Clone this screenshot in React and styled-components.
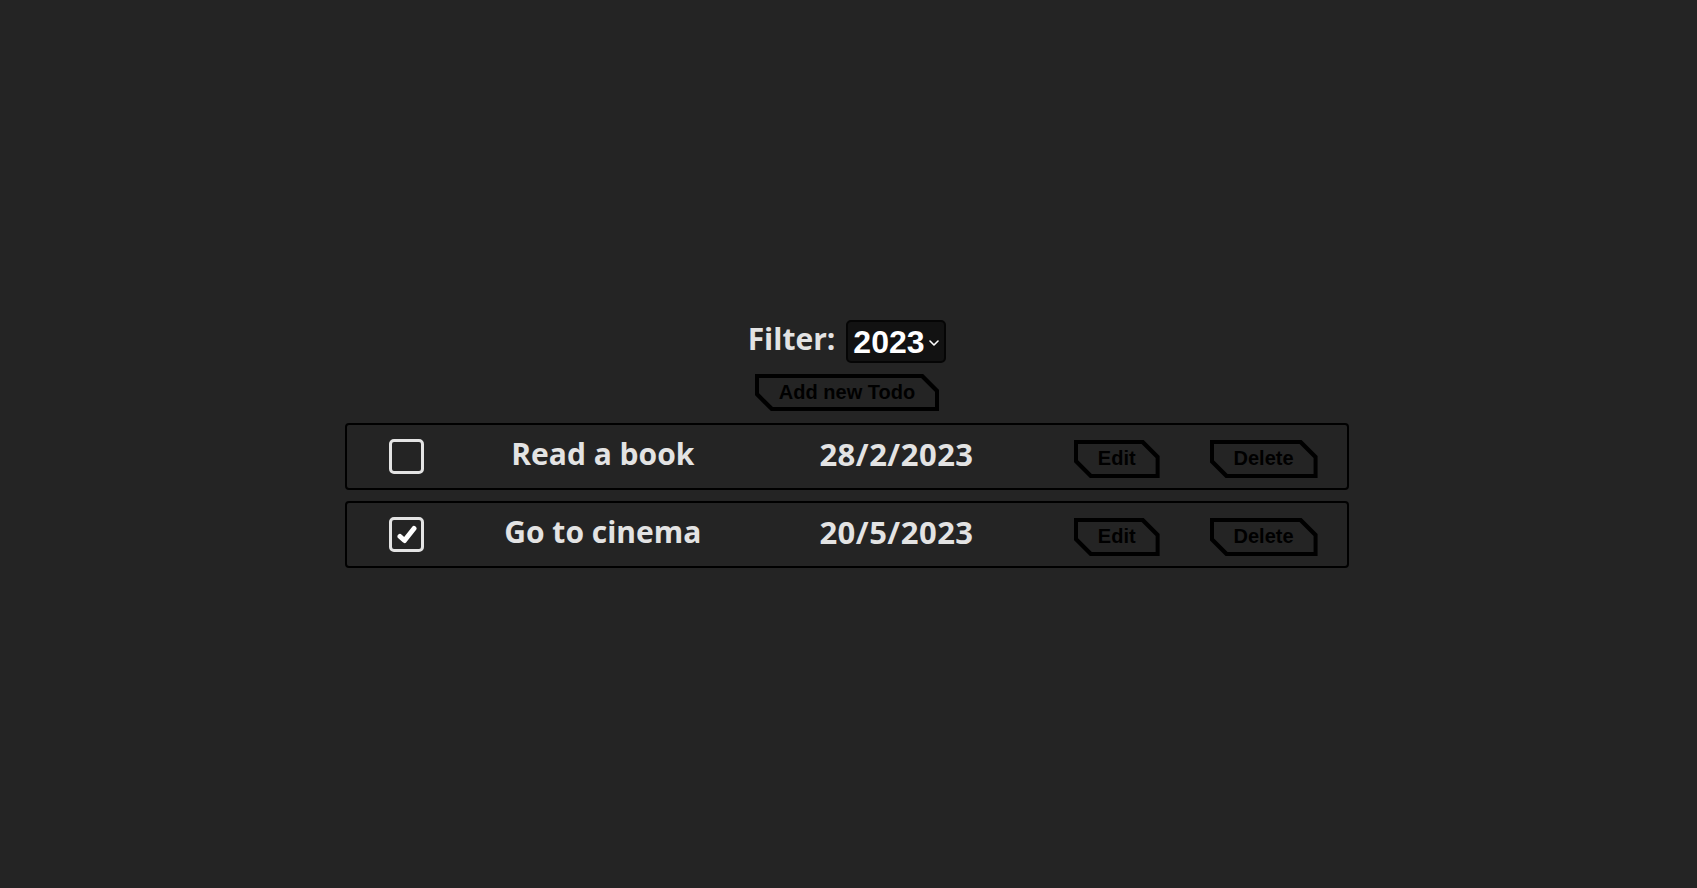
import React, { useState } from "react";
import styled, { createGlobalStyle } from "styled-components";

const GlobalStyle = createGlobalStyle`
  html, body { margin: 0; padding: 0; }
  body {
    background: #242424;
    color: rgba(255, 255, 255, 0.87);
    font-family: "Open Sans", "Noto Sans", sans-serif;
    min-height: 100vh;
    display: flex;
    align-items: center;
    justify-content: center;
    padding-right: 3px;
    box-sizing: border-box;
  }
  #root { width: 100%; }
`;

const Page = styled.main`
  display: flex;
  flex-direction: column;
  align-items: center;
`;

const FilterRow = styled.div`
  display: flex;
  align-items: center;
  gap: 11px;
  height: 43px;
`;

const FilterLabel = styled.label`
  font-family: "Open Sans", sans-serif;
  font-weight: 700;
  font-size: 30px;
  color: #e3e3e3;
  line-height: 1;
  margin-top: -6px;
`;

const SelectBox = styled.div`
  display: flex;
  align-items: center;
  box-sizing: border-box;
  width: 100px;
  height: 43px;
  padding: 0 6px 0 5px;
  background: #121212;
  border: 2px solid #050505;
  border-radius: 5px;
`;

const NativeSelect = styled.select`
  appearance: none;
  -webkit-appearance: none;
  background: transparent;
  border: none;
  outline: none;
  color: #ffffff;
  font-family: "Liberation Sans", Arial, sans-serif;
  font-weight: 700;
  font-size: 32px;
  padding: 0;
  margin: 0;
  width: 72px;
  cursor: pointer;
  option { background: #121212; color: #fff; }
`;

const Chevron = styled.svg`
  width: 10px;
  height: 6px;
  margin-left: 4px;
  margin-top: 2px;
  flex: none;
`;

const ShapeButton = styled.button`
  position: relative;
  isolation: isolate;
  box-sizing: border-box;
  height: ${(p) => p.$h}px;
  padding: 0 24px 2px;
  margin-top: ${(p) => p.$offset || 0}px;
  border: none;
  background: #000;
  color: #000;
  font-family: "Liberation Sans", Arial, sans-serif;
  font-weight: 700;
  font-size: 20px;
  line-height: 1;
  cursor: pointer;
  clip-path: polygon(0 0, calc(100% - 16px) 0, 100% 16px, 100% 100%, 16px 100%, 0 calc(100% - 16px));
  &::before {
    content: "";
    position: absolute;
    inset: 4px;
    background: #242424;
    clip-path: polygon(0 0, calc(100% - 14px) 0, 100% 14px, 100% 100%, 14px 100%, 0 calc(100% - 14px));
    z-index: -1;
  }
`;

const AddButton = styled(ShapeButton)`
  margin-top: 11px;
  margin-bottom: 12px;
`;

const List = styled.ul`
  list-style: none;
  margin: 0;
  padding: 0;
  display: flex;
  flex-direction: column;
  gap: 11px;
`;

const Row = styled.li`
  box-sizing: content-box;
  width: 980px;
  height: 63px;
  padding: 0 10px;
  border: 2px solid #000;
  border-radius: 4px;
  display: grid;
  grid-template-columns: 99px 2fr 2fr 1fr 1fr;
  align-items: center;
  justify-items: center;
`;

const CheckLabel = styled.label`
  display: flex;
  cursor: pointer;
  input { position: absolute; opacity: 0; width: 0; height: 0; }
`;

const CheckBox = styled.span`
  box-sizing: border-box;
  width: 35px;
  height: 35px;
  border: 3px solid #e3e3e3;
  border-radius: 5px;
  display: flex;
  align-items: center;
  justify-content: center;
  svg { width: 22px; height: 20px; }
`;

const Cell = styled.span`
  font-family: "Open Sans", sans-serif;
  font-weight: 700;
  font-size: ${(p) => (p.$date ? 31 : 30)}px;
  letter-spacing: ${(p) => (p.$date ? "0.5px" : "0")};
  color: #e3e3e3;
  white-space: nowrap;
  margin-top: -6px;
`;

const initial = [
  { id: 1, title: "Read a book", date: "28/2/2023", done: false },
  { id: 2, title: "Go to cinema", date: "20/5/2023", done: true },
];

export default function App() {
  const [todos, setTodos] = useState(initial);
  const [year, setYear] = useState("2023");

  const toggle = (id) =>
    setTodos((t) => t.map((x) => (x.id === id ? { ...x, done: !x.done } : x)));

  return (
    <>
      <GlobalStyle />
      <Page>
        <FilterRow>
          <FilterLabel htmlFor="year">Filter:</FilterLabel>
          <SelectBox>
            <NativeSelect id="year" value={year} onChange={(e) => setYear(e.target.value)}>
              <option value="2022">2022</option>
              <option value="2023">2023</option>
              <option value="2024">2024</option>
            </NativeSelect>
            <Chevron viewBox="0 0 10 6">
              <path d="M1 1 L5 5 L9 1" fill="none" stroke="#fff" strokeWidth="1.6" strokeLinecap="round" strokeLinejoin="round" />
            </Chevron>
          </SelectBox>
        </FilterRow>
        <AddButton $h={37}>Add new Todo</AddButton>
        <List>
          {todos.map((t) => (
            <Row key={t.id}>
              <CheckLabel>
                <input type="checkbox" checked={t.done} onChange={() => toggle(t.id)} />
                <CheckBox>
                  {t.done && (
                    <svg viewBox="0 0 22 20">
                      <path d="M4 11.5 L8.5 15.5 L18 3.5" fill="none" stroke="#fff" strokeWidth="5" strokeLinecap="round" strokeLinejoin="round" />
                    </svg>
                  )}
                </CheckBox>
              </CheckLabel>
              <Cell>{t.title}</Cell>
              <Cell $date>{t.date}</Cell>
              <ShapeButton $h={38} $offset={5}>Edit</ShapeButton>
              <ShapeButton $h={38} $offset={5}>Delete</ShapeButton>
            </Row>
          ))}
        </List>
      </Page>
    </>
  );
}
